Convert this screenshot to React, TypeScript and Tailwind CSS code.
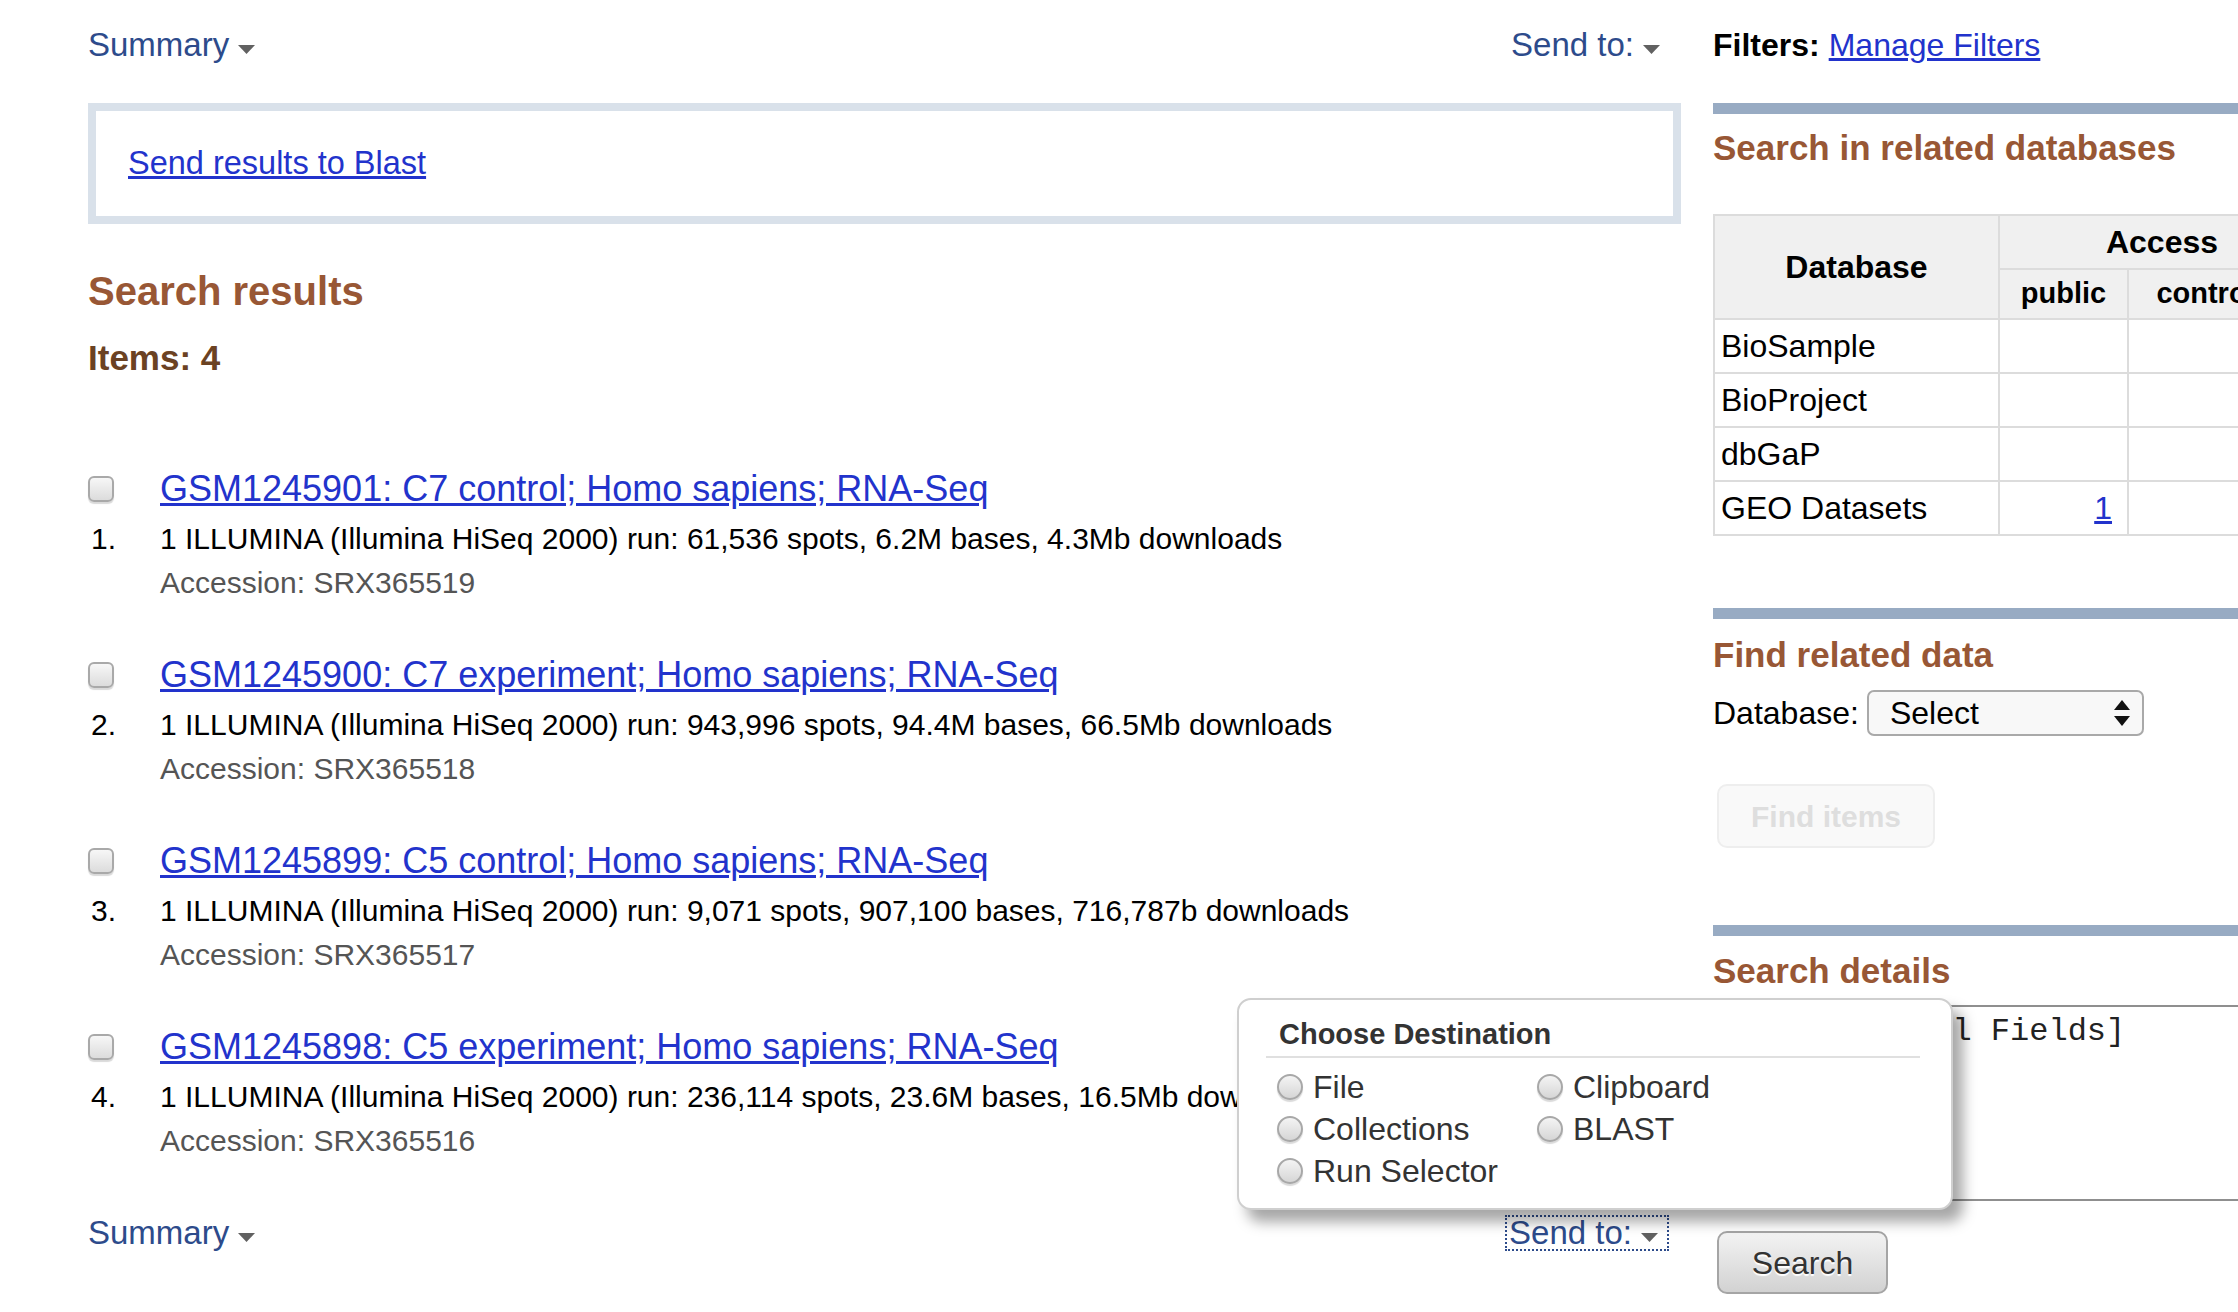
const Caret = () => (
    <svg width="17" height="10" viewBox="0 0 17 10" className="ml-[9px] mt-[8px]">
        <polygon points="0,1 17,1 8.5,10" fill="#616161" />
    </svg>
);

const results = [
    {
        id: 'GSM1245901',
        title: 'GSM1245901: C7 control; Homo sapiens; RNA-Seq',
        desc: '1 ILLUMINA (Illumina HiSeq 2000) run: 61,536 spots, 6.2M bases, 4.3Mb downloads',
        acc: 'SRX365519',
    },
    {
        id: 'GSM1245900',
        title: 'GSM1245900: C7 experiment; Homo sapiens; RNA-Seq',
        desc: '1 ILLUMINA (Illumina HiSeq 2000) run: 943,996 spots, 94.4M bases, 66.5Mb downloads',
        acc: 'SRX365518',
    },
    {
        id: 'GSM1245899',
        title: 'GSM1245899: C5 control; Homo sapiens; RNA-Seq',
        desc: '1 ILLUMINA (Illumina HiSeq 2000) run: 9,071 spots, 907,100 bases, 716,787b downloads',
        acc: 'SRX365517',
    },
    {
        id: 'GSM1245898',
        title: 'GSM1245898: C5 experiment; Homo sapiens; RNA-Seq',
        desc: '1 ILLUMINA (Illumina HiSeq 2000) run: 236,114 spots, 23.6M bases, 16.5Mb downloads',
        acc: 'SRX365516',
    },
];

const related = [
    { name: 'BioSample', pub: '' },
    { name: 'BioProject', pub: '' },
    { name: 'dbGaP', pub: '' },
    { name: 'GEO Datasets', pub: '1' },
];

function Checkbox() {
    return (
        <span className="block w-[26px] h-[26px] rounded-[6px] border-2 border-[#a9a9a9] bg-gradient-to-b from-[#f7f7f7] to-[#dcdcdc] shadow-[0_2px_1px_rgba(0,0,0,0.15)]" />
    );
}

function Radio({ label }: { label: string }) {
    return (
        <div className="flex items-center h-[42px]">
            <span className="block w-[26px] h-[26px] rounded-full border-2 border-[#a8a8a8] bg-gradient-to-b from-[#f4f4f4] to-[#d6d6d6] shadow-[0_2px_1px_rgba(0,0,0,0.15)]" />
            <span className="ml-[10px] text-[32px] leading-[42px] text-[#333]">{label}</span>
        </div>
    );
}

function SectionBar() {
    return <div className="h-[11px] bg-[#98abc3]" />;
}

export default function App() {
    return (
        <div className="relative w-[2238px] h-[1312px] overflow-hidden bg-white font-['Liberation_Sans',Arial,sans-serif]">
            <div className="flex">
                {/* main column */}
                <div className="ml-[88px] w-[1593px] shrink-0">
                    <div className="mt-[26px] h-[37px] flex items-center justify-between pr-[21px]">
                        <span className="flex items-center text-[33px] text-[#2d4b8b]">Summary<Caret /></span>
                        <span className="flex items-center text-[33px] text-[#2d4b8b]">Send to:<Caret /></span>
                    </div>

                    <div className="mt-[40px] h-[121px] border-[8px] border-[#d9e1ea] flex items-center pl-[32px]">
                        <a className="text-[32.5px] text-[#2233cc] underline">Send results to Blast</a>
                    </div>

                    <h2 className="mt-[44px] text-[40px] leading-[46px] font-bold text-[#985735]">Search results</h2>
                    <div className="mt-[24px] text-[35px] leading-[40px] font-bold text-[#6b4223]">Items: 4</div>

                    <div className="mt-[86px]">
                        {results.map((r, i) => (
                            <div key={r.id} className="grid grid-cols-[72px_1fr] pb-[48px]">
                                <div className="h-[50px] flex items-center"><Checkbox /></div>
                                <a className="text-[36px] leading-[50px] text-[#2233cc] underline whitespace-nowrap">{r.title}</a>
                                <div className="pl-[3px] text-[30px] leading-[50px] text-black">{i + 1}.</div>
                                <div className="text-[30px] leading-[50px] text-black whitespace-nowrap">{r.desc}</div>
                                <div />
                                <div className="text-[30px] leading-[38px] text-[#555]">Accession: {r.acc}</div>
                            </div>
                        ))}
                    </div>

                    <div className="mt-[6px] h-[37px] flex items-center justify-between pr-[12px]">
                        <span className="flex items-center text-[33px] text-[#2d4b8b]">Summary<Caret /></span>
                        <span className="flex items-center h-[36px] text-[33px] leading-[32px] text-[#2d4b8b] pl-[2px] pr-[9px] border-2 border-dotted border-[#2d4b8b]">Send to:<Caret /></span>
                    </div>
                </div>

                {/* sidebar */}
                <div className="ml-[32px] w-[640px] shrink-0">
                    <div className="mt-[26px] h-[37px] flex items-center text-[32px]">
                        <span className="font-bold text-black">Filters:</span>
                        <a className="ml-[9px] text-[#2233cc] underline">Manage Filters</a>
                    </div>

                    <div className="mt-[40px]"><SectionBar /></div>
                    <h3 className="mt-[14px] text-[35px] leading-[40px] font-bold text-[#985735]">Search in related databases</h3>

                    <table className="mt-[46px] border-collapse border-2 border-[#dcdcdc] text-[32px]">
                        <thead className="bg-[#f0f0f0]">
                            <tr className="h-[54px]">
                                <th rowSpan={2} className="w-[285px] border-2 border-[#dcdcdc] font-bold text-center">Database</th>
                                <th colSpan={2} className="border-2 border-[#dcdcdc] font-bold text-center">Access</th>
                            </tr>
                            <tr className="h-[50px] text-[29px]">
                                <th className="w-[129px] border-2 border-[#dcdcdc] font-bold text-center">public</th>
                                <th className="w-[197px] border-2 border-[#dcdcdc] font-bold text-center">controlled</th>
                            </tr>
                        </thead>
                        <tbody>
                            {related.map((d) => (
                                <tr key={d.name} className="h-[54px]">
                                    <td className="border-2 border-[#dcdcdc] pl-[6px]">{d.name}</td>
                                    <td className="border-2 border-[#dcdcdc] text-right pr-[15px]">
                                        {d.pub && <a className="text-[#2233cc] underline">{d.pub}</a>}
                                    </td>
                                    <td className="border-2 border-[#dcdcdc]" />
                                </tr>
                            ))}
                        </tbody>
                    </table>

                    <div className="mt-[72px]"><SectionBar /></div>
                    <h3 className="mt-[16px] text-[35px] leading-[40px] font-bold text-[#985735]">Find related data</h3>
                    <div className="mt-[14px] flex items-center">
                        <span className="text-[32px] text-black">Database:</span>
                        <div className="ml-[8px] w-[277px] h-[46px] rounded-[7px] border-2 border-[#a9a9a9] bg-[#f8f8f8] flex items-center justify-between pl-[21px] pr-[11px]">
                            <span className="text-[32px] text-black">Select</span>
                            <svg width="18" height="30" viewBox="0 0 18 30">
                                <polygon points="9,2 17,12 1,12" fill="#111" />
                                <polygon points="1,18 17,18 9,28" fill="#111" />
                            </svg>
                        </div>
                    </div>
                    <div className="mt-[47px] ml-[4px] w-[218px] h-[64px] rounded-[10px] border-2 border-[#eeeeee] bg-[#f9f9f9] flex items-center justify-center">
                        <span className="text-[30px] font-bold text-[#dedede]">Find items</span>
                    </div>

                    <div className="mt-[77px]"><SectionBar /></div>
                    <h3 className="mt-[15px] text-[35px] leading-[40px] font-bold text-[#985735]">Search details</h3>
                    <div className="mt-[14px] h-[196px] border-2 border-[#8f8f8f] border-r-0 pl-[7px] pt-[5px]">
                        <div className="font-['Liberation_Mono','Courier_New',monospace] text-[32px] leading-[40px] text-[#222]">SRP031478[All Fields]</div>
                    </div>
                    <div className="mt-[30px] ml-[4px] w-[171px] h-[63px] rounded-[10px] border-2 border-[#a5a5a5] bg-gradient-to-b from-[#f3f3f3] to-[#d2d2d2] flex items-center justify-center">
                        <span className="text-[32px] text-[#333] [text-shadow:0_2px_1px_#fff]">Search</span>
                    </div>
                </div>
            </div>

            {/* Send to popup */}
            <div className="absolute left-[1237px] top-[998px] w-[716px] h-[212px] rounded-[14px] border-2 border-[#cfcfcf] bg-white shadow-[10px_12px_14px_rgba(0,0,0,0.35)]">
                <div className="ml-[40px] mt-[16px] text-[29px] leading-[36px] font-bold text-[#333]">Choose Destination</div>
                <div className="ml-[27px] mr-[31px] mt-[4px] h-[2px] bg-[#e0e0e0]" />
                <div className="ml-[38px] mt-[8px] grid grid-cols-[260px_1fr]">
                    <Radio label="File" />
                    <Radio label="Clipboard" />
                    <Radio label="Collections" />
                    <Radio label="BLAST" />
                    <Radio label="Run Selector" />
                </div>
            </div>
        </div>
    );
}
